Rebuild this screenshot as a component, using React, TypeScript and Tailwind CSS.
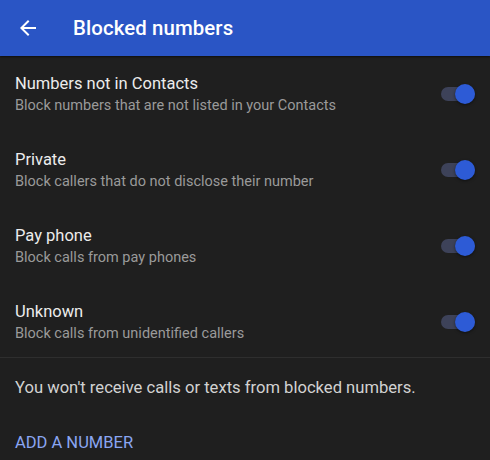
import React from "react";

const rows = [
  { title: "Numbers not in Contacts", sub: "Block numbers that are not listed in your Contacts" },
  { title: "Private", sub: "Block callers that do not disclose their number" },
  { title: "Pay phone", sub: "Block calls from pay phones" },
  { title: "Unknown", sub: "Block calls from unidentified callers" },
];

function Toggle() {
  return (
    <div className="relative w-[34px] h-[14px] mr-[15px] shrink-0">
      <div className="absolute inset-0 rounded-full bg-[#3d4259]" />
      <div className="absolute right-0 top-[-3px] w-[20px] h-[20px] rounded-full bg-[#2d5bd6] shadow-[0_1px_3px_rgba(0,0,0,0.5)]" />
    </div>
  );
}

export default function App() {
  return (
    <div className="w-[490px] h-[460px] bg-[#1f1f1f] overflow-hidden flex flex-col" style={{ fontFamily: "Roboto, 'Liberation Sans', sans-serif" }}>
      <div className="h-[56px] bg-[#2a55c5] flex items-center shrink-0 shadow-[0_1px_2px_rgba(0,0,0,0.6)]">
        <svg className="ml-[16px]" width="24" height="24" viewBox="0 0 24 24" fill="#ffffff">
          <path d="M20 11H7.83l5.59-5.59L12 4l-8 8 8 8 1.41-1.41L7.83 13H20v-2z" />
        </svg>
        <div className="ml-[33px] text-[20.4px] font-medium text-white tracking-[0.1px]">Blocked numbers</div>
      </div>
      <div className="flex flex-col">
        {rows.map((r) => (
          <div key={r.title} className="h-[76px] flex items-center pl-[15px]">
            <div className="flex-1 flex flex-col">
              <div className="text-[16.5px] leading-[24px] text-[#ececec]">{r.title}</div>
              <div className="text-[14.5px] leading-[20px] text-[#9a9a9a]">{r.sub}</div>
            </div>
            <Toggle />
          </div>
        ))}
      </div>
      <div className="h-px bg-[#2e2e2e] -mt-[3px]" />
      <div className="pl-[15px] pt-[18px] text-[16.6px] leading-[24px] text-[#d2d2d2]">
        You won't receive calls or texts from blocked numbers.
      </div>
      <div className="pl-[15px] pt-[31px] text-[16.5px] leading-[24px] text-[#8aa6f2]">
        ADD A NUMBER
      </div>
    </div>
  );
}
